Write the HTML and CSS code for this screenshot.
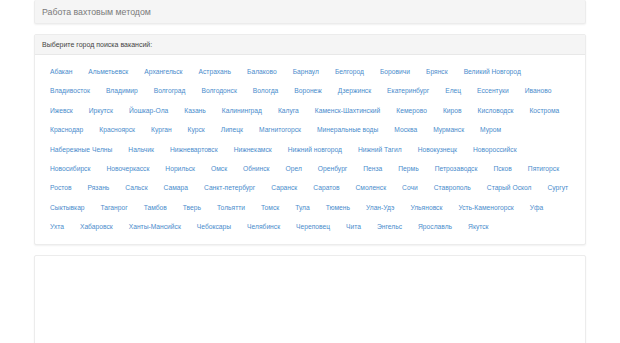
FILE: index.html
```html
<!DOCTYPE html>
<html lang="ru">
<head>
<meta charset="utf-8">
<title>Работа вахтовым методом</title>
<link rel="stylesheet" href="styles.css">
</head>
<body>
<div class="page">
  <div class="panel title-panel">
    <h1 class="title">Работа вахтовым методом</h1>
  </div>
  <div class="panel">
    <div class="panel-heading">Выберите город поиска вакансий:</div>
    <div class="panel-body cities">
      <a href="#">Абакан</a>
      <a href="#">Альметьевск</a>
      <a href="#">Архангельск</a>
      <a href="#">Астрахань</a>
      <a href="#">Балаково</a>
      <a href="#">Барнаул</a>
      <a href="#">Белгород</a>
      <a href="#">Боровичи</a>
      <a href="#">Брянск</a>
      <a href="#">Великий Новгород</a>
      <a href="#">Владивосток</a>
      <a href="#">Владимир</a>
      <a href="#">Волгоград</a>
      <a href="#">Волгодонск</a>
      <a href="#">Вологда</a>
      <a href="#">Воронеж</a>
      <a href="#">Дзержинск</a>
      <a href="#">Екатеринбург</a>
      <a href="#">Елец</a>
      <a href="#">Ессентуки</a>
      <a href="#">Иваново</a>
      <a href="#">Ижевск</a>
      <a href="#">Иркутск</a>
      <a href="#">Йошкар-Ола</a>
      <a href="#">Казань</a>
      <a href="#">Калининград</a>
      <a href="#">Калуга</a>
      <a href="#">Каменск-Шахтинский</a>
      <a href="#">Кемерово</a>
      <a href="#">Киров</a>
      <a href="#">Кисловодск</a>
      <a href="#">Кострома</a>
      <a href="#">Краснодар</a>
      <a href="#">Красноярск</a>
      <a href="#">Курган</a>
      <a href="#">Курск</a>
      <a href="#">Липецк</a>
      <a href="#">Магнитогорск</a>
      <a href="#">Минеральные воды</a>
      <a href="#">Москва</a>
      <a href="#">Мурманск</a>
      <a href="#">Муром</a>
      <a href="#">Набережные Челны</a>
      <a href="#">Нальчик</a>
      <a href="#">Нижневартовск</a>
      <a href="#">Нижнекамск</a>
      <a href="#">Нижний новгород</a>
      <a href="#">Нижний Тагил</a>
      <a href="#">Новокузнецк</a>
      <a href="#">Новороссийск</a>
      <a href="#">Новосибирск</a>
      <a href="#">Новочеркасск</a>
      <a href="#">Норильск</a>
      <a href="#">Омск</a>
      <a href="#">Обнинск</a>
      <a href="#">Орел</a>
      <a href="#">Оренбург</a>
      <a href="#">Пенза</a>
      <a href="#">Пермь</a>
      <a href="#">Петрозаводск</a>
      <a href="#">Псков</a>
      <a href="#">Пятигорск</a>
      <a href="#">Ростов</a>
      <a href="#">Рязань</a>
      <a href="#">Сальск</a>
      <a href="#">Самара</a>
      <a href="#">Санкт-петербург</a>
      <a href="#">Саранск</a>
      <a href="#">Саратов</a>
      <a href="#">Смоленск</a>
      <a href="#">Сочи</a>
      <a href="#">Ставрополь</a>
      <a href="#">Старый Оскол</a>
      <a href="#">Сургут</a>
      <a href="#">Сыктывкар</a>
      <a href="#">Таганрог</a>
      <a href="#">Тамбов</a>
      <a href="#">Тверь</a>
      <a href="#">Тольятти</a>
      <a href="#">Томск</a>
      <a href="#">Тула</a>
      <a href="#">Тюмень</a>
      <a href="#">Улан-Удэ</a>
      <a href="#">Ульяновск</a>
      <a href="#">Усть-Каменогорск</a>
      <a href="#">Уфа</a>
      <a href="#">Ухта</a>
      <a href="#">Хабаровск</a>
      <a href="#">Ханты-Мансийск</a>
      <a href="#">Чебоксары</a>
      <a href="#">Челябинск</a>
      <a href="#">Череповец</a>
      <a href="#">Чита</a>
      <a href="#">Энгельс</a>
      <a href="#">Ярославль</a>
      <a href="#">Якутск</a>
    </div>
  </div>
  <div class="panel empty-panel"></div>
</div>
</body>
</html>
```

FILE: styles.css
```css
html, body {
  margin: 0;
  padding: 0;
  background: #fff;
  font-family: "Liberation Sans", Arial, sans-serif;
  overflow: hidden;
}
.page {
  width: 552px;
  margin-left: 34px;
  display: flex;
  flex-direction: column;
  gap: 10px;
}
.panel {
  border: 1px solid #ececec;
  border-radius: 2px;
  box-shadow: 0 1px 2px rgba(0, 0, 0, 0.06);
  background: #fff;
}
.title-panel {
  background: #f5f5f5;
  border-top: none;
  height: 24px;
  box-sizing: border-box;
  display: flex;
  align-items: center;
  padding: 0 7px;
}
.title {
  margin: 0;
  font-size: 8.8px;
  font-weight: 400;
  color: #7a7a7a;
}
.panel-heading {
  background: #f5f5f5;
  border-bottom: 1px solid #e8e8e8;
  height: 20px;
  box-sizing: border-box;
  display: flex;
  align-items: center;
  padding: 0 7px;
  font-size: 7px;
  color: #444;
}
.cities {
  display: flex;
  flex-wrap: wrap;
  column-gap: 16px;
  row-gap: 9.4px;
  padding: 12px 15px 12px 15px;
}
.cities a {
  font-size: 6.7px;
  line-height: 10px;
  color: #4a8ccc;
  text-decoration: none;
}
.empty-panel {
  height: 120px;
}
```
